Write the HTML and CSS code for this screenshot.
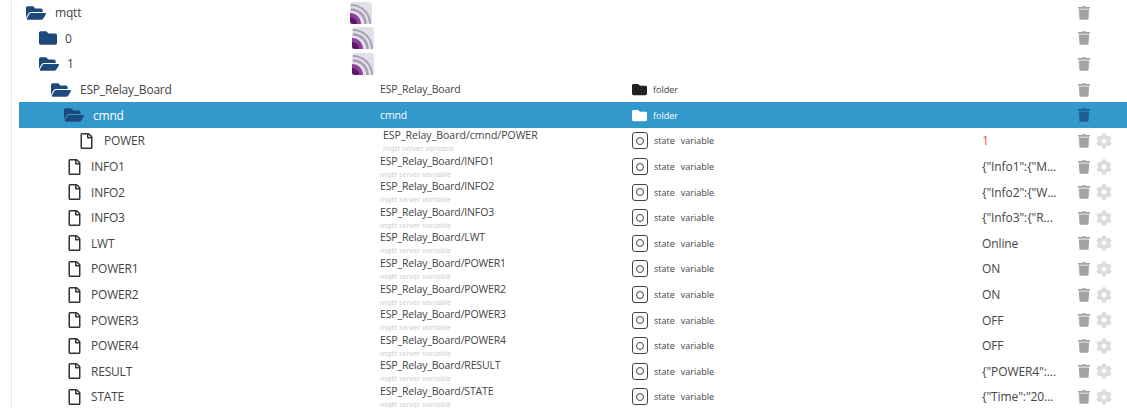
FILE: index.html
```html
<!DOCTYPE html>
<html lang="en">
<head>
<meta charset="utf-8">
<title>Objects</title>
<link rel="stylesheet" href="styles.css">
</head>
<body>
<svg class="defs" width="0" height="0" aria-hidden="true">
  <defs>
    <symbol id="i-open" viewBox="0 0 576 512"><path d="M572.694 292.093L500.27 416.248A63.997 63.997 0 0 1 444.989 448H45.025c-18.523 0-30.064-20.093-20.731-36.093l72.424-124.155A64 64 0 0 1 152 256h399.964c18.523 0 30.064 20.093 20.73 36.093zM152 224h328v-48c0-26.51-21.49-48-48-48H272l-64-64H48C21.49 64 0 85.49 0 112v278.046l69.077-118.418C86.214 242.25 117.989 224 152 224z"/></symbol>
    <symbol id="i-folder" viewBox="0 0 512 512"><path d="M464 128H272l-64-64H48C21.49 64 0 85.49 0 112v288c0 26.51 21.49 48 48 48h416c26.51 0 48-21.49 48-48V176c0-26.51-21.49-48-48-48z"/></symbol>
    <symbol id="i-file" viewBox="0 0 384 512"><path d="M369.9 97.9L286 14C277 5 264.8-.1 252.1-.1H48C21.5 0 0 21.5 0 48v416c0 26.5 21.5 48 48 48h288c26.5 0 48-21.5 48-48V131.9c0-12.7-5.1-25-14.1-34zM332.1 128H256V51.9l76.1 76.1zM48 464V48h160v104c0 13.3 10.7 24 24 24h104v288H48z"/></symbol>
    <symbol id="i-trash" viewBox="0 0 448 512"><path d="M432 32H312l-9.4-18.7A24 24 0 0 0 281.1 0H166.8a23.72 23.72 0 0 0-21.4 13.3L136 32H16A16 16 0 0 0 0 48v32a16 16 0 0 0 16 16h416a16 16 0 0 0 16-16V48a16 16 0 0 0-16-16zM53.2 467a48 48 0 0 0 47.9 45h245.8a48 48 0 0 0 47.9-45L416 128H32z"/></symbol>
    <symbol id="i-cog" viewBox="0 0 512 512"><path d="M487.4 315.7l-42.6-24.6c4.3-23.2 4.3-47 0-70.2l42.6-24.6c4.9-2.8 7.1-8.6 5.5-14-11.1-35.6-30-67.8-54.7-94.6-3.8-4.1-10-5.1-14.8-2.3L380.8 110c-17.9-15.4-38.5-27.3-60.8-35.1V25.8c0-5.6-3.9-10.5-9.4-11.7-36.7-8.2-74.3-7.8-109.2 0-5.5 1.2-9.4 6.1-9.4 11.7V75c-22.2 7.9-42.8 19.8-60.8 35.1L88.7 85.5c-4.9-2.8-11-1.9-14.8 2.3-24.7 26.7-43.6 58.9-54.7 94.6-1.7 5.4.6 11.2 5.5 14L67.3 221c-4.3 23.2-4.3 47 0 70.2l-42.6 24.6c-4.9 2.8-7.1 8.6-5.5 14 11.1 35.6 30 67.8 54.7 94.6 3.8 4.1 10 5.1 14.8 2.3l42.6-24.6c17.9 15.4 38.5 27.3 60.8 35.1v49.2c0 5.6 3.9 10.5 9.4 11.7 36.7 8.2 74.3 7.8 109.2 0 5.5-1.2 9.4-6.1 9.4-11.7v-49.2c22.2-7.9 42.8-19.8 60.8-35.1l42.6 24.6c4.9 2.8 11 1.9 14.8-2.3 24.7-26.7 43.6-58.9 54.7-94.6 1.5-5.5-.7-11.3-5.6-14.1zM256 336c-44.1 0-80-35.9-80-80s35.9-80 80-80 80 35.9 80 80-35.9 80-80 80z"/></symbol>
    <symbol id="i-rss" viewBox="0 0 22 22">
      <rect width="22" height="22" rx="3" fill="#e4e0ea"/>
      <g fill="none" stroke-linecap="butt">
        <path d="M1 3 A 19 19 0 0 1 20 22" stroke="#a9a3b5" stroke-width="2"/>
        <path d="M1 7.5 A 14.5 14.5 0 0 1 15.5 22" stroke="#a89cb8" stroke-width="2.5"/>
      </g>
      <path d="M0 11 A 11 11 0 0 1 11 22 H3 A 3 3 0 0 1 0 19 Z" fill="#8d3f9c"/>
      <path d="M0 15 A 7 7 0 0 1 7 22 H3 A 3 3 0 0 1 0 19 Z" fill="#5e1769"/>
    </symbol>
  </defs>
</svg>

<main class="tree">
  <div class="row">
    <div class="name lvl-0"><svg class="ico folder-ico"><use href="#i-open"/></svg><span>mqtt</span></div>
    <div class="id"><svg class="state-img"><use href="#i-rss"/></svg></div>
    <div class="type"></div><div class="value"></div>
    <div class="actions"><svg class="trash"><use href="#i-trash"/></svg></div>
  </div>
  <div class="row">
    <div class="name lvl-1"><svg class="ico folder-ico closed"><use href="#i-folder"/></svg><span>0</span></div>
    <div class="id nudge-img"><svg class="state-img"><use href="#i-rss"/></svg></div>
    <div class="type"></div><div class="value"></div>
    <div class="actions"><svg class="trash"><use href="#i-trash"/></svg></div>
  </div>
  <div class="row">
    <div class="name lvl-1"><svg class="ico folder-ico"><use href="#i-open"/></svg><span>1</span></div>
    <div class="id nudge-img"><svg class="state-img"><use href="#i-rss"/></svg></div>
    <div class="type"></div><div class="value"></div>
    <div class="actions"><svg class="trash"><use href="#i-trash"/></svg></div>
  </div>
  <div class="row">
    <div class="name lvl-2"><svg class="ico folder-ico"><use href="#i-open"/></svg><span>ESP_Relay_Board</span></div>
    <div class="id"><p class="path">ESP_Relay_Board</p></div>
    <div class="type"><svg class="type-folder"><use href="#i-folder"/></svg><span>folder</span></div>
    <div class="value"></div>
    <div class="actions"><svg class="trash"><use href="#i-trash"/></svg></div>
  </div>
  <div class="row selected">
    <div class="name lvl-3"><svg class="ico folder-ico"><use href="#i-open"/></svg><span>cmnd</span></div>
    <div class="id"><p class="path">cmnd</p></div>
    <div class="type"><svg class="type-folder"><use href="#i-folder"/></svg><span>folder</span></div>
    <div class="value"></div>
    <div class="actions"><svg class="trash"><use href="#i-trash"/></svg></div>
  </div>
  <div class="row nudged">
    <div class="name lvl-4"><svg class="ico file-ico"><use href="#i-file"/></svg><span>POWER</span></div>
    <div class="id"><p class="path">ESP_Relay_Board/cmnd/POWER</p><p class="sub">mqtt server variable</p></div>
    <div class="type"><span class="state-box"><i></i></span><span>state</span><span>variable</span></div>
    <div class="value red">1</div>
    <div class="actions"><svg class="trash"><use href="#i-trash"/></svg><svg class="cog"><use href="#i-cog"/></svg></div>
  </div>
  <div class="row">
    <div class="name lvl-3b"><svg class="ico file-ico"><use href="#i-file"/></svg><span>INFO1</span></div>
    <div class="id"><p class="path">ESP_Relay_Board/INFO1</p><p class="sub">mqtt server variable</p></div>
    <div class="type"><span class="state-box"><i></i></span><span>state</span><span>variable</span></div>
    <div class="value">{"Info1":{"M...</div>
    <div class="actions"><svg class="trash"><use href="#i-trash"/></svg><svg class="cog"><use href="#i-cog"/></svg></div>
  </div>
  <div class="row">
    <div class="name lvl-3b"><svg class="ico file-ico"><use href="#i-file"/></svg><span>INFO2</span></div>
    <div class="id"><p class="path">ESP_Relay_Board/INFO2</p><p class="sub">mqtt server variable</p></div>
    <div class="type"><span class="state-box"><i></i></span><span>state</span><span>variable</span></div>
    <div class="value">{"Info2":{"W...</div>
    <div class="actions"><svg class="trash"><use href="#i-trash"/></svg><svg class="cog"><use href="#i-cog"/></svg></div>
  </div>
  <div class="row">
    <div class="name lvl-3b"><svg class="ico file-ico"><use href="#i-file"/></svg><span>INFO3</span></div>
    <div class="id"><p class="path">ESP_Relay_Board/INFO3</p><p class="sub">mqtt server variable</p></div>
    <div class="type"><span class="state-box"><i></i></span><span>state</span><span>variable</span></div>
    <div class="value">{"Info3":{"R...</div>
    <div class="actions"><svg class="trash"><use href="#i-trash"/></svg><svg class="cog"><use href="#i-cog"/></svg></div>
  </div>
  <div class="row">
    <div class="name lvl-3b"><svg class="ico file-ico"><use href="#i-file"/></svg><span>LWT</span></div>
    <div class="id"><p class="path">ESP_Relay_Board/LWT</p><p class="sub">mqtt server variable</p></div>
    <div class="type"><span class="state-box"><i></i></span><span>state</span><span>variable</span></div>
    <div class="value">Online</div>
    <div class="actions"><svg class="trash"><use href="#i-trash"/></svg><svg class="cog"><use href="#i-cog"/></svg></div>
  </div>
  <div class="row">
    <div class="name lvl-3b"><svg class="ico file-ico"><use href="#i-file"/></svg><span>POWER1</span></div>
    <div class="id"><p class="path">ESP_Relay_Board/POWER1</p><p class="sub">mqtt server variable</p></div>
    <div class="type"><span class="state-box"><i></i></span><span>state</span><span>variable</span></div>
    <div class="value">ON</div>
    <div class="actions"><svg class="trash"><use href="#i-trash"/></svg><svg class="cog"><use href="#i-cog"/></svg></div>
  </div>
  <div class="row">
    <div class="name lvl-3b"><svg class="ico file-ico"><use href="#i-file"/></svg><span>POWER2</span></div>
    <div class="id"><p class="path">ESP_Relay_Board/POWER2</p><p class="sub">mqtt server variable</p></div>
    <div class="type"><span class="state-box"><i></i></span><span>state</span><span>variable</span></div>
    <div class="value">ON</div>
    <div class="actions"><svg class="trash"><use href="#i-trash"/></svg><svg class="cog"><use href="#i-cog"/></svg></div>
  </div>
  <div class="row">
    <div class="name lvl-3b"><svg class="ico file-ico"><use href="#i-file"/></svg><span>POWER3</span></div>
    <div class="id"><p class="path">ESP_Relay_Board/POWER3</p><p class="sub">mqtt server variable</p></div>
    <div class="type"><span class="state-box"><i></i></span><span>state</span><span>variable</span></div>
    <div class="value">OFF</div>
    <div class="actions"><svg class="trash"><use href="#i-trash"/></svg><svg class="cog"><use href="#i-cog"/></svg></div>
  </div>
  <div class="row">
    <div class="name lvl-3b"><svg class="ico file-ico"><use href="#i-file"/></svg><span>POWER4</span></div>
    <div class="id"><p class="path">ESP_Relay_Board/POWER4</p><p class="sub">mqtt server variable</p></div>
    <div class="type"><span class="state-box"><i></i></span><span>state</span><span>variable</span></div>
    <div class="value">OFF</div>
    <div class="actions"><svg class="trash"><use href="#i-trash"/></svg><svg class="cog"><use href="#i-cog"/></svg></div>
  </div>
  <div class="row">
    <div class="name lvl-3b"><svg class="ico file-ico"><use href="#i-file"/></svg><span>RESULT</span></div>
    <div class="id"><p class="path">ESP_Relay_Board/RESULT</p><p class="sub">mqtt server variable</p></div>
    <div class="type"><span class="state-box"><i></i></span><span>state</span><span>variable</span></div>
    <div class="value">{"POWER4":...</div>
    <div class="actions"><svg class="trash"><use href="#i-trash"/></svg><svg class="cog"><use href="#i-cog"/></svg></div>
  </div>
  <div class="row">
    <div class="name lvl-3b"><svg class="ico file-ico"><use href="#i-file"/></svg><span>STATE</span></div>
    <div class="id"><p class="path">ESP_Relay_Board/STATE</p><p class="sub">mqtt server variable</p></div>
    <div class="type"><span class="state-box"><i></i></span><span>state</span><span>variable</span></div>
    <div class="value">{"Time":"20...</div>
    <div class="actions"><svg class="trash"><use href="#i-trash"/></svg><svg class="cog"><use href="#i-cog"/></svg></div>
  </div>
</main>
</body>
</html>
```

FILE: styles.css
```css
* { box-sizing: border-box; }
html, body { height: 100%; }
body {
  margin: 0;
  overflow: hidden;
  background: #fff;
  color: #444;
  font-family: "Open Sans", "Noto Sans", sans-serif;
  font-size: 12px;
}
.defs { display: block; height: 0; }
p { margin: 0; }

.tree {
  margin-left: 11px;
  padding-left: 7px;
  border-left: 1px solid #e8e8e8;
  height: 408px;
  overflow: hidden;
}
.row {
  display: grid;
  grid-template-columns: 361px 250px 352px 96px 1fr;
  height: 25.6px;
  align-items: center;
}
.name { display: flex; align-items: center; min-width: 0; letter-spacing: -0.2px; }
.lvl-0 { padding-left: 7px; }
.lvl-1 { padding-left: 20px; }
.lvl-2 { padding-left: 32px; }
.lvl-3 { padding-left: 45px; }
.lvl-4 { padding-left: 61px; }
.lvl-3b { padding-left: 49px; }
.lvl-0 span { margin-left: 9px; }
.lvl-1 span { margin-left: 8px; }
.lvl-2 span { margin-left: 9px; }
.lvl-3 span { margin-left: 9px; }
.lvl-4 span { margin-left: -1px; }
.lvl-3b span { margin-left: -2px; }

.ico { flex: none; }
.folder-ico { width: 20px; height: 18px; fill: #1d4a7d; }
.folder-ico.closed { width: 18px; }
.file-ico { width: 13px; height: 16px; fill: #333; margin-right: 12px; }

.id { font-size: 10.5px; letter-spacing: -0.15px; line-height: 13px; min-width: 0; }
.path { white-space: nowrap; padding-top: 1px; }
.id .path:only-child { padding-top: 0; }
.sub { font-size: 8px; font-style: italic; color: #cacaca; line-height: 12px; letter-spacing: 0; white-space: nowrap; }
.nudged .id { padding-left: 3px; }
.nudged .path { letter-spacing: 0; }
.nudge-img { padding-left: 2px; }
.state-img { display: block; width: 22px; height: 22px; margin-left: -30px; }

.type { display: flex; align-items: center; gap: 6px; font-size: 9px; color: #444; }
.type-folder { width: 15px; height: 15px; fill: #222; margin-left: 2px; }
.state-box {
  display: flex; align-items: center; justify-content: center;
  width: 16px; height: 17px;
  border: 1px solid #444; border-radius: 3px;
  margin-left: 2px;
}
.state-box i { width: 8px; height: 8px; border: 1px solid #444; border-radius: 50%; }

.value { font-size: 12px; letter-spacing: -0.1px; white-space: nowrap; }
.red { color: #d9534f; }

.actions { display: flex; align-items: center; gap: 6px; }
.trash { width: 12px; height: 14px; fill: #a3a3a3; }
.cog { width: 16px; height: 16px; fill: #dcdcdc; }

.selected { background: #3399cc; color: #fff; }
.selected .type { color: #fff; }
.selected .type-folder { fill: #fff; }
.selected .trash { fill: #1d5f8f; }
```
